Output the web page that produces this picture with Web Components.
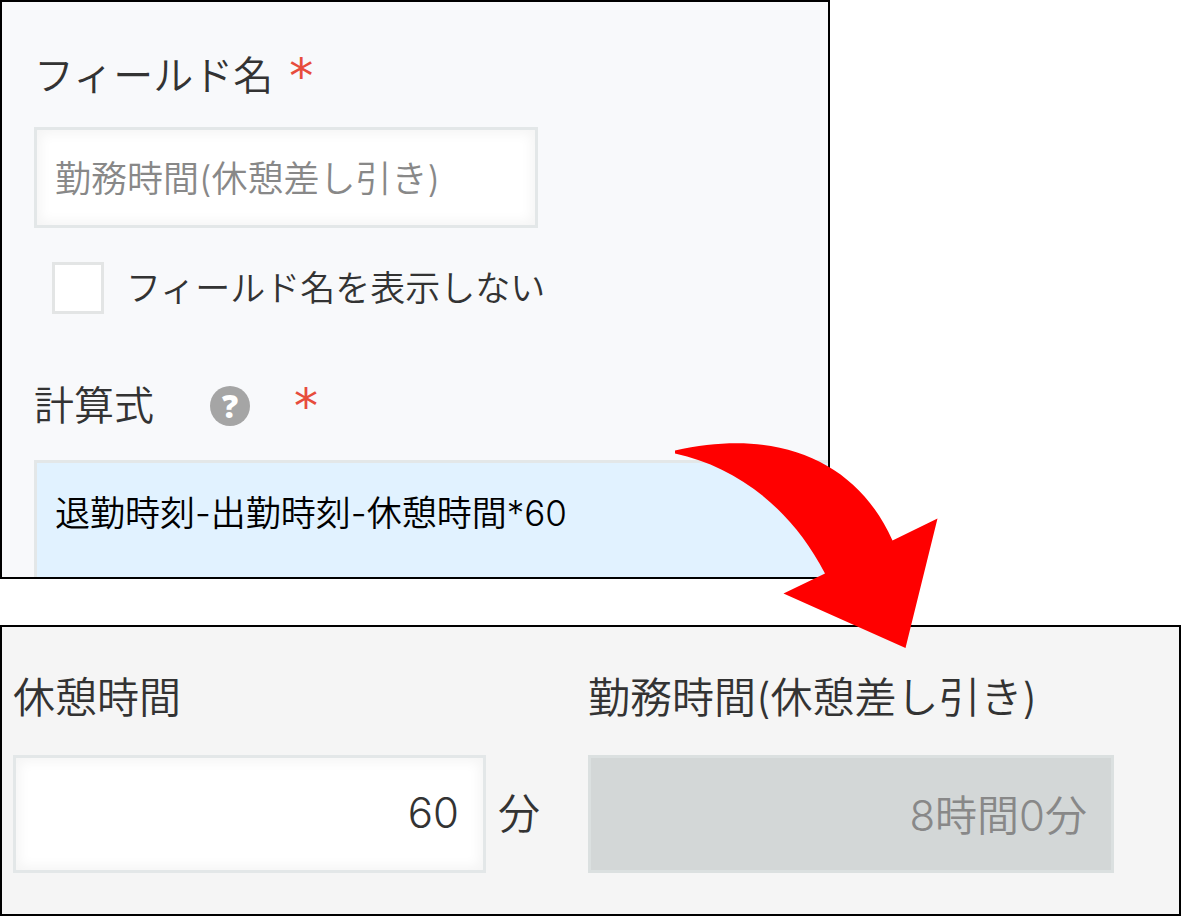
<!DOCTYPE html>
<html lang="ja">
<head>
<meta charset="utf-8">
<title>計算フィールドの設定</title>
<style>
  body {
    margin: 0;
    background: #fff;
    color: #333;
    font-family: "Inter", "Noto Sans CJK JP", sans-serif;
    font-weight: 350;
  }
</style>
</head>
<body>
<calc-guide>
  <box-panel slot="settings">
    <setting-fields></setting-fields>
  </box-panel>
  <box-panel slot="record">
    <record-fields></record-fields>
  </box-panel>
  <flow-arrow slot="arrow"></flow-arrow>
</calc-guide>

<script>
const define = (name, html) => customElements.define(name, class extends HTMLElement {
  constructor() {
    super();
    this.attachShadow({ mode: 'open' }).innerHTML = html;
  }
});

define('calc-guide', `
  <style>
    :host { display: grid; grid-template-columns: 830fr 351fr; row-gap: 46px; position: relative; }
    slot[name="settings"]::slotted(*) { grid-column: 1; --panel-bg: #f8f9fb; }
    slot[name="record"]::slotted(*) { grid-column: 1 / -1; --panel-bg: #f5f5f5; }
    slot[name="arrow"]::slotted(*) { position: absolute; left: 675px; top: 443px; }
  </style>
  <slot name="settings"></slot><slot name="record"></slot><slot name="arrow"></slot>`);

define('box-panel', `
  <style>
    :host { display: block; box-sizing: border-box; min-width: 0; border: 2px solid #000; background: var(--panel-bg); overflow: hidden; }
  </style>
  <slot></slot>`);

define('required-mark', `
  <style>
    :host { display: block; color: #e74c3c; font: 48px/48px "DejaVu Sans", sans-serif; }
  </style>*`);

define('help-button', `
  <style>
    :host { display: block; }
    button {
      display: flex; align-items: center; justify-content: center;
      width: 40px; height: 40px; padding: 0; border: 0; border-radius: 50%;
      background: #a5a5a5; color: #fff; font: 800 32px/40px "Open Sans", sans-serif;
    }
  </style>
  <button type="button" aria-label="ヘルプ">?</button>`);

define('setting-fields', `
  <style>
    :host { display: block; padding: 44px 0 0 32px; }
    * { box-sizing: border-box; }
    .head { display: flex; align-items: center; height: 60px; font-size: 40px; line-height: 60px; }
    .head required-mark { margin-left: 16px; }
    .name {
      display: block; width: 504px; max-width: 100%; height: 101px; margin-top: 21px; padding: 0 18px 4px;
      border: 3px solid #e3e7e8; background: #fff; box-shadow: inset 0 0 12px 4px #f5f5f5;
      color: #888; font: inherit; font-size: 36px;
    }
    .check { display: flex; align-items: center; gap: 22px; margin: 34px 0 0 18px; height: 52px; font-size: 35px; line-height: 52px; }
    .check input { appearance: none; flex: none; width: 52px; height: 52px; margin: 0; border: 3px solid #e3e5e5; background: #fff; }
    .formula-head { margin-top: 62px; }
    .formula-head help-button { margin-left: 56px; }
    .formula-head required-mark { margin-left: 44px; }
    textarea {
      display: block; width: 100%; height: 117px; margin-top: 24px; padding: 24px 18px 0;
      border: solid #e3e7e8; border-width: 3px 0 0 3px; border-radius: 0; resize: none; overflow: hidden;
      background: #e1f2ff; color: #000; font: inherit; font-size: 35px; line-height: 52px;
    }
  </style>
  <div class="head"><label for="name">フィールド名</label><required-mark></required-mark></div>
  <input class="name" id="name" type="text" value="勤務時間(休憩差し引き)">
  <label class="check"><input type="checkbox"><span>フィールド名を表示しない</span></label>
  <div class="head formula-head"><label for="formula">計算式</label><help-button></help-button><required-mark></required-mark></div>
  <textarea id="formula">退勤時刻-出勤時刻-休憩時間*60</textarea>`);

define('record-fields', `
  <style>
    :host { display: grid; grid-template-columns: 575fr 526fr 65fr; padding: 41px 0 41px 11px; }
    * { box-sizing: border-box; }
    .field { min-width: 0; }
    .title { display: block; font-size: 42px; line-height: 60px; white-space: nowrap; }
    .row { display: flex; align-items: center; gap: 12px; margin-top: 27px; font-size: 42px; line-height: 60px; }
    input {
      flex: 1; min-width: 0; height: 118px; padding: 0 24px 4px; border: 3px solid #e3e7e8; border-radius: 0;
      background: #fff; box-shadow: inset 0 0 12px 4px #f5f5f5; color: #333; font: inherit; text-align: right;
    }
    input[readonly] { background: #d3d7d7; border-color: #dbe0e0; box-shadow: none; color: #888; }
    .break .row { padding-right: 48px; }
  </style>
  <div class="field break">
    <label class="title" for="break">休憩時間</label>
    <div class="row"><input id="break" type="text" value="60"><span>分</span></div>
  </div>
  <div class="field">
    <label class="title" for="work">勤務時間(休憩差し引き)</label>
    <div class="row"><input id="work" type="text" value="8時間0分" readonly></div>
  </div>`);

define('flow-arrow', `
  <style>
    :host { display: block; width: 263px; height: 206px; pointer-events: none; }
    svg { display: block; width: 100%; height: 100%; }
  </style>
  <svg viewBox="0 0 263 206" aria-hidden="true">
    <path fill="#f00" d="M0 7.500C104-16 182 18 217.500 97.500L262.500 75.500L230.500 205L108.500 150.500L150 130.500C116 65 62 24 0 10.500Z"/>
  </svg>`);
</script>
</body>
</html>
